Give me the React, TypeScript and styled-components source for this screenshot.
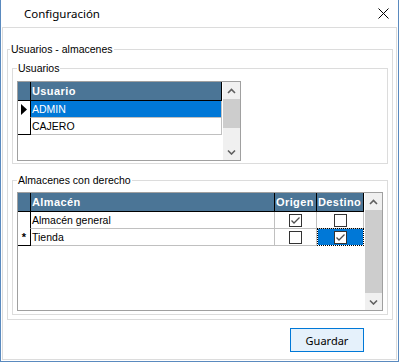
import styled, { createGlobalStyle } from "styled-components";

const GlobalStyle = createGlobalStyle`
  html, body {
    margin: 0;
    padding: 0;
    background: #fff;
  }
  body {
    font-family: "Liberation Sans", Arial, sans-serif;
    font-size: 10.5px;
    color: #000;
  }
  * {
    box-sizing: border-box;
  }
`;

const users = [
  { id: 1, name: "ADMIN", current: true },
  { id: 2, name: "CAJERO", current: false },
];

const stores = [
  { id: 1, name: "Almacén general", origen: true, destino: false, isNew: false },
  { id: 2, name: "Tienda", origen: false, destino: true, isNew: true },
];

const Window = styled.div`
  width: 399px;
  height: 362px;
  display: flex;
  flex-direction: column;
  background: #fff;
  border: 1px solid #5a8abf;
  border-top: none;
`;

const TitleBar = styled.div`
  height: 27px;
  flex: none;
  display: flex;
  align-items: center;
  justify-content: space-between;
  padding: 0 9px 0 23px;
  font-family: "Noto Sans", "Open Sans", sans-serif;
  font-size: 11.5px;
  color: #000;
`;

const CloseIcon = styled.svg`
  width: 11px;
  height: 11px;
  display: block;
`;

const Client = styled.div`
  flex: 1;
  margin: 0 1px 1px 1px;
  border: 1px solid #dcdcdc;
  display: flex;
  flex-direction: column;
  padding: 15px 3px 0 4px;
`;

const GroupBox = styled.fieldset<{ $pad: string; $top?: number }>`
  margin: ${({ $top }) => $top ?? 0}px 0 0 0;
  padding: ${({ $pad }) => $pad};
  border: 1px solid #dcdcdc;
  min-width: 0;
`;

const Caption = styled.legend<{ $shift?: number }>`
  padding: 0 1px;
  margin-left: ${({ $shift }) => $shift ?? 0}px;
  line-height: 13px;
  font-size: 10.5px;
`;

const GridFrame = styled.div<{ $width: number; $height: number }>`
  width: ${({ $width }) => $width}px;
  height: ${({ $height }) => $height}px;
  border: 1px solid #a0a0a0;
  display: flex;
  background: #fff;
`;

const GridTable = styled.div`
  flex: 1;
  display: flex;
  flex-direction: column;
  min-width: 0;
`;

const GridRow = styled.div<{ $columns: string }>`
  display: grid;
  grid-template-columns: ${({ $columns }) => $columns};
`;

const HeaderCell = styled.div`
  height: 19px;
  background: #4b7596;
  color: #fff;
  font-weight: bold;
  font-size: 11px;
  letter-spacing: 0.4px;
  border-right: 1px solid #000;
  border-bottom: 1px solid #000;
  display: flex;
  align-items: center;
  padding-left: 1px;
  white-space: nowrap;
  overflow: hidden;
`;

const IndicatorCell = styled.div<{ $last?: boolean }>`
  height: 17px;
  border-right: 1px solid #000;
  border-bottom: 1px solid ${({ $last }) => ($last ? "#000" : "transparent")};
  display: flex;
  align-items: center;
  justify-content: center;
  font-size: 11px;
  font-weight: bold;
`;

const DataCell = styled.div<{ $selected?: boolean; $focused?: boolean; $center?: boolean }>`
  height: ${({ $focused }) => ($focused ? 18 : 17)}px;
  margin-top: ${({ $focused }) => ($focused ? -1 : 0)}px;
  border-right: 1px solid #c0c0c0;
  border-bottom: 1px solid #c0c0c0;
  ${({ $focused }) =>
    $focused &&
    `
    border: 1px dotted #000;
    background: linear-gradient(#0078d7, #0078d7) padding-box, #e0904a border-box;
  `}
  background-color: ${({ $selected, $focused }) => ($focused ? "transparent" : $selected ? "#0078d7" : "#fff")};
  color: ${({ $selected }) => ($selected ? "#fff" : "#000")};
  display: flex;
  align-items: center;
  justify-content: ${({ $center }) => ($center ? "center" : "flex-start")};
  padding-left: ${({ $center }) => ($center ? 0 : 1)}px;
  white-space: nowrap;
  overflow: hidden;
`;

const Check = styled.div`
  width: 13px;
  height: 13px;
  border: 1px solid #333;
  background: #fff;
  display: flex;
  align-items: center;
  justify-content: center;
`;

const ScrollBar = styled.div`
  width: 17px;
  flex: none;
  background: #f0f0f0;
  display: flex;
  flex-direction: column;
`;

const ScrollArrow = styled.div`
  height: 17px;
  flex: none;
  display: flex;
  align-items: center;
  justify-content: center;
`;

const ScrollTrack = styled.div`
  flex: 1;
  display: flex;
  flex-direction: column;
`;

const ScrollThumb = styled.div<{ $size: number }>`
  height: ${({ $size }) => $size}px;
  flex: none;
  background: #cdcdcd;
`;

const Footer = styled.div`
  display: flex;
  justify-content: flex-end;
  padding: 8px 29px 0 0;
`;

const Button = styled.button`
  width: 74px;
  height: 24px;
  border: 1px solid #0078d7;
  background: #e5f1fb;
  color: #000;
  font-family: "Noto Sans", "Open Sans", sans-serif;
  font-size: 11px;
  padding: 0;
  cursor: pointer;
`;

function Chevron({ down }: { down?: boolean }) {
  return (
    <svg width="9" height="6" viewBox="0 0 9 6">
      <polyline
        points={down ? "1,1.5 4.5,5 8,1.5" : "1,5 4.5,1.5 8,5"}
        fill="none"
        stroke="#606060"
        strokeWidth="1.6"
      />
    </svg>
  );
}

function Scroller({ thumb }: { thumb: number }) {
  return (
    <ScrollBar>
      <ScrollArrow>
        <Chevron />
      </ScrollArrow>
      <ScrollTrack>
        <ScrollThumb $size={thumb} />
      </ScrollTrack>
      <ScrollArrow>
        <Chevron down />
      </ScrollArrow>
    </ScrollBar>
  );
}

function CheckBox({ checked }: { checked: boolean }) {
  return (
    <Check>
      {checked ? (
        <svg width="11" height="11" viewBox="0 0 11 11">
          <polyline points="1.5,5.5 4,8 9.5,2.5" fill="none" stroke="#4d4d4d" strokeWidth="1.3" />
        </svg>
      ) : null}
    </Check>
  );
}

function CurrentMarker() {
  return (
    <svg width="6" height="11" viewBox="0 0 6 11">
      <polygon points="0,0 6,5.5 0,11" fill="#000" />
    </svg>
  );
}

const userColumns = "13px 191px";
const storeColumns = "13px 244px 42px 47px";

export default function App() {
  return (
    <>
      <GlobalStyle />
      <Window>
        <TitleBar>
          <span>Configuración</span>
          <CloseIcon viewBox="0 0 11 11">
            <path d="M0.5 0.5 L10.5 10.5 M10.5 0.5 L0.5 10.5" stroke="#000" strokeWidth="1" fill="none" />
          </CloseIcon>
        </TitleBar>

        <Client>
          <GroupBox $pad="6px 4px 4px 4px">
            <Caption $shift={-2}>Usuarios - almacenes</Caption>

            <GroupBox $pad="6px 4px 2px 4px">
              <Caption>Usuarios</Caption>
              <GridFrame $width={224} $height={80}>
                <GridTable>
                  <GridRow $columns={userColumns}>
                    <HeaderCell />
                    <HeaderCell>Usuario</HeaderCell>
                  </GridRow>
                  {users.map((user, index) => (
                    <GridRow key={user.id} $columns={userColumns}>
                      <IndicatorCell $last={index === users.length - 1}>
                        {user.current ? <CurrentMarker /> : null}
                      </IndicatorCell>
                      <DataCell $selected={user.current}>{user.name}</DataCell>
                    </GridRow>
                  ))}
                </GridTable>
                <Scroller thumb={29} />
              </GridFrame>
            </GroupBox>

            <GroupBox $pad="5px 4px 3px 4px" $top={10}>
              <Caption>Almacenes con derecho</Caption>
              <GridFrame $width={366} $height={119}>
                <GridTable>
                  <GridRow $columns={storeColumns}>
                    <HeaderCell />
                    <HeaderCell>Almacén</HeaderCell>
                    <HeaderCell>Origen</HeaderCell>
                    <HeaderCell>Destino</HeaderCell>
                  </GridRow>
                  {stores.map((store, index) => (
                    <GridRow key={store.id} $columns={storeColumns}>
                      <IndicatorCell $last={index === stores.length - 1}>{store.isNew ? "*" : null}</IndicatorCell>
                      <DataCell>{store.name}</DataCell>
                      <DataCell $center>
                        <CheckBox checked={store.origen} />
                      </DataCell>
                      <DataCell $center $focused={store.isNew}>
                        <CheckBox checked={store.destino} />
                      </DataCell>
                    </GridRow>
                  ))}
                </GridTable>
                <Scroller thumb={83} />
              </GridFrame>
            </GroupBox>
          </GroupBox>

          <Footer>
            <Button type="button">Guardar</Button>
          </Footer>
        </Client>
      </Window>
    </>
  );
}
